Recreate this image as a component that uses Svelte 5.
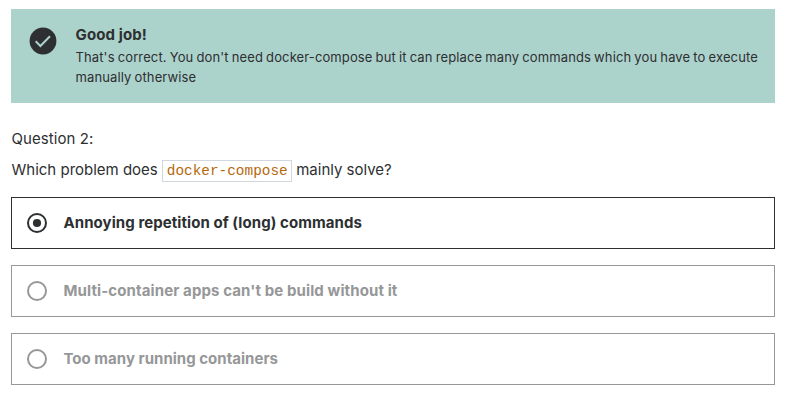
<script>
  const answers = [
    { text: 'Annoying repetition of (long) commands', tracking: 0.07, selected: true },
    { text: "Multi-container apps can't be build without it", tracking: 0.11, selected: false },
    { text: 'Too many running containers', tracking: 0.02, selected: false }
  ];
</script>

<main>
  <section class="alert">
    <svg class="check" width="28" height="28" viewBox="0 0 28 28">
      <circle cx="14" cy="14" r="13.4" fill="#2d2f31" />
      <path d="M6.7 14.3l4.7 4.7 9.6-9.7" fill="none" stroke="#acd2cc" stroke-width="2" />
    </svg>
    <div class="message">
      <h2>Good job!</h2>
      <p>That's correct. You don't need docker-compose but it can replace many commands which you have to execute<br />manually otherwise</p>
    </div>
  </section>

  <p class="number">Question 2:</p>
  <p class="question"><span>Which problem does</span><code>docker-compose</code><span>mainly solve?</span></p>

  <ul>
    {#each answers as answer}
      <li class:selected={answer.selected}>
        <svg width="20" height="20" viewBox="0 0 20 20">
          <circle cx="10" cy="10" r="9" fill="none" stroke="currentColor" stroke-width="2" />
          {#if answer.selected}<circle cx="10" cy="10" r="4.1" fill="currentColor" />{/if}
        </svg>
        <span style="letter-spacing: {answer.tracking}px">{answer.text}</span>
      </li>
    {/each}
  </ul>
</main>

<style>
  :global(body) { margin: 0; background: #fff; }
  main {
    box-sizing: border-box; width: 785px; height: 400px; padding: 9px 10px 0 11px;
    font-family: Inter, "Liberation Sans", sans-serif; color: #2d2f31; white-space: nowrap;
  }
  h2, p, ul { margin: 0; padding: 0; }
  .alert { display: flex; height: 94px; box-sizing: border-box; padding: 16px 18px; background: #acd2cc; }
  .check { margin: 2px 18.5px 0 0; flex: none; }
  h2 { font-size: 15px; line-height: 20px; font-weight: 700; letter-spacing: 0.12px; }
  .message p { margin-top: 2px; font-size: 13px; line-height: 20px; letter-spacing: 0.12px; word-spacing: -0.7px; }
  .number { margin-top: 25px; padding-left: 0.5px; font-size: 15px; line-height: 22px; letter-spacing: 0.08px; }
  .question { display: flex; align-items: center; height: 22px; margin-top: 10px; padding-left: 0.5px; font-size: 15px; }
  .question span { line-height: 20px; margin-bottom: 2px; }
  code {
    box-sizing: border-box; height: 22px; margin: 0 4px; padding: 0 3.5px 0 4px; border: 1px solid #d1d7dc;
    font: 14.4px/20px "Liberation Mono", monospace; color: #b4690e;
  }
  ul { display: flex; flex-direction: column; gap: 16px; margin-top: 15px; list-style: none; }
  li {
    display: flex; align-items: center; gap: 16.5px; box-sizing: border-box; height: 52px;
    padding: 0 15px; border: 1px solid #989898; color: #969798; font-size: 15px; font-weight: 700;
  }
  li span { line-height: 20px; }
  li.selected { border-color: #2d2f31; color: #2d2f31; }
</style>
